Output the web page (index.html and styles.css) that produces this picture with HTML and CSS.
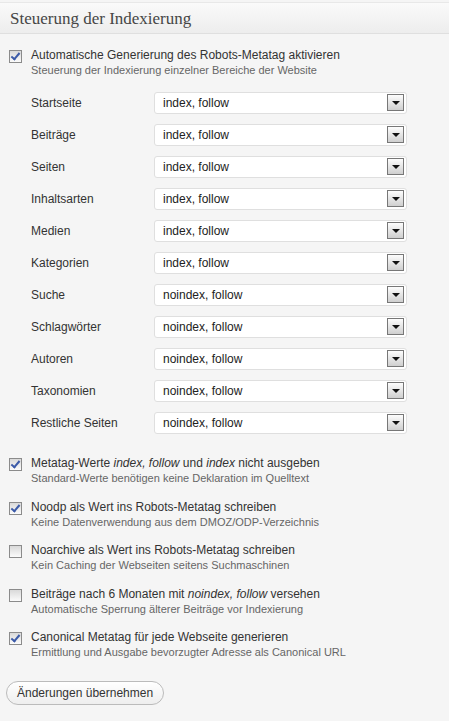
FILE: index.html
```html
<!DOCTYPE html>
<html lang="de">
<head>
    <meta charset="UTF-8">
    <title>Steuerung der Indexierung</title>
    <link rel="stylesheet" href="styles.css">
</head>
<body>

    <div class="box">
        <h3 class="box-title">Steuerung der Indexierung</h3>

        <div class="box-inner">
            <div class="option">
                <span class="check checked"></span>
                <div>
                    <div class="label">Automatische Generierung des Robots-Metatag aktivieren</div>
                    <div class="desc">Steuerung der Indexierung einzelner Bereiche der Website</div>
                </div>
            </div>

            <div class="rows">
                <div class="row"><span class="row-label">Startseite</span><div class="select">index, follow<span class="arrow"></span></div></div>
                <div class="row"><span class="row-label">Beiträge</span><div class="select">index, follow<span class="arrow"></span></div></div>
                <div class="row"><span class="row-label">Seiten</span><div class="select">index, follow<span class="arrow"></span></div></div>
                <div class="row"><span class="row-label">Inhaltsarten</span><div class="select">index, follow<span class="arrow"></span></div></div>
                <div class="row"><span class="row-label">Medien</span><div class="select">index, follow<span class="arrow"></span></div></div>
                <div class="row"><span class="row-label">Kategorien</span><div class="select">index, follow<span class="arrow"></span></div></div>
                <div class="row"><span class="row-label">Suche</span><div class="select">noindex, follow<span class="arrow"></span></div></div>
                <div class="row"><span class="row-label">Schlagwörter</span><div class="select">noindex, follow<span class="arrow"></span></div></div>
                <div class="row"><span class="row-label">Autoren</span><div class="select">noindex, follow<span class="arrow"></span></div></div>
                <div class="row"><span class="row-label">Taxonomien</span><div class="select">noindex, follow<span class="arrow"></span></div></div>
                <div class="row"><span class="row-label">Restliche Seiten</span><div class="select">noindex, follow<span class="arrow"></span></div></div>
            </div>

            <div class="option">
                <span class="check checked"></span>
                <div>
                    <div class="label">Metatag-Werte <em>index, follow</em> und <em>index</em> nicht ausgeben</div>
                    <div class="desc">Standard-Werte benötigen keine Deklaration im Quelltext</div>
                </div>
            </div>

            <div class="option">
                <span class="check checked"></span>
                <div>
                    <div class="label">Noodp als Wert ins Robots-Metatag schreiben</div>
                    <div class="desc">Keine Datenverwendung aus dem DMOZ/ODP-Verzeichnis</div>
                </div>
            </div>

            <div class="option">
                <span class="check"></span>
                <div>
                    <div class="label">Noarchive als Wert ins Robots-Metatag schreiben</div>
                    <div class="desc">Kein Caching der Webseiten seitens Suchmaschinen</div>
                </div>
            </div>

            <div class="option">
                <span class="check"></span>
                <div>
                    <div class="label">Beiträge nach 6 Monaten mit <em>noindex, follow</em> versehen</div>
                    <div class="desc">Automatische Sperrung älterer Beiträge vor Indexierung</div>
                </div>
            </div>

            <div class="option">
                <span class="check checked"></span>
                <div>
                    <div class="label">Canonical Metatag für jede Webseite generieren</div>
                    <div class="desc">Ermittlung und Ausgabe bevorzugter Adresse als Canonical URL</div>
                </div>
            </div>

            <button class="button">Änderungen übernehmen</button>
        </div>
    </div>

</body>
</html>
```

FILE: styles.css
```css
body {
    font-family: "Liberation Sans", Arial, sans-serif;
    background-color: #f5f5f5;
    margin: 0;
    padding: 0;
    color: #333;
}
.box {
    margin-top: 2px;
    border-top: 1px solid #e8e8e8;
}
.box-title {
    margin: 0;
    height: 30px;
    line-height: 31px;
    padding-left: 10px;
    font-family: "Liberation Serif", Georgia, serif;
    font-weight: normal;
    font-size: 17px;
    color: #464646;
    background: linear-gradient(#fafafa, #ededed);
    border-bottom: 1px solid #dfdfdf;
}
.box-inner {
    padding: 13px 9px 0 9px;
}
.option {
    display: flex;
    gap: 9px;
    margin-bottom: 13.5px;
}
.check {
    flex: none;
    width: 11px;
    height: 11px;
    margin-top: 3px;
    border: 1px solid #8b8b8b;
    background: linear-gradient(#d9d9d9, #fbfbfb);
    position: relative;
}
.check.checked::after {
    content: "";
    position: absolute;
    left: 3px;
    top: 0px;
    width: 3px;
    height: 7px;
    border: solid #3b5aa8;
    border-width: 0 2px 2px 0;
    transform: rotate(40deg);
}
.label {
    font-size: 12px;
    line-height: 16px;
    color: #333;
}
.label em {
    font-style: italic;
}
.desc {
    font-size: 11px;
    line-height: 14px;
    color: #666;
}
.rows {
    padding-left: 22px;
    margin-top: 15px;
    margin-bottom: 21px;
}
.row {
    display: flex;
    align-items: center;
    height: 22px;
    margin-bottom: 10px;
}
.row-label {
    width: 123px;
    font-size: 12px;
    color: #333;
}
.select {
    position: relative;
    width: 243px;
    height: 20px;
    line-height: 20px;
    padding-left: 8px;
    background: white;
    border: 1px solid #dfdfdf;
    border-radius: 3px;
    font-size: 12px;
    color: #222;
}
.arrow {
    position: absolute;
    right: 2px;
    top: 1px;
    width: 15px;
    height: 15px;
    border: 1px solid #777;
    background: linear-gradient(#fdfdfd, #cfcfcf);
}
.arrow::after {
    content: "";
    position: absolute;
    left: 4px;
    top: 6px;
    border-left: 4px solid transparent;
    border-right: 4px solid transparent;
    border-top: 4px solid #111;
}
.button {
    margin-top: 8px;
    margin-left: -3px;
    height: 24px;
    padding: 0 10px;
    font-family: "Liberation Sans", Arial, sans-serif;
    font-size: 12px;
    color: #333;
    background: linear-gradient(#ffffff, #eeeeee);
    border: 1px solid #bbb;
    border-radius: 12px;
}
```
